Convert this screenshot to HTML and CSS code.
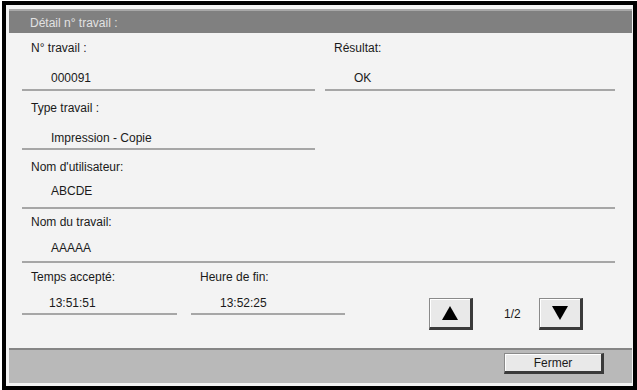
FILE: index.html
```html
<!DOCTYPE html>
<html lang="fr">
<head>
<meta charset="UTF-8">
<title>Détail n° travail</title>
<link rel="stylesheet" href="styles.css">
</head>
<body>

<div class="frame">
  <div class="title">Détail n° travail :</div>

  <div class="details">
    <!-- numéro + résultat -->
    <div class="row r1">
      <div class="field w-half">
        <div class="label">N° travail :</div>
        <div class="value">000091</div>
      </div>
      <div class="field w-result">
        <div class="label">Résultat:</div>
        <div class="value">OK</div>
      </div>
    </div>

    <div class="row r2">
      <div class="field w-half">
        <div class="label">Type travail :</div>
        <div class="value">Impression - Copie</div>
      </div>
    </div>

    <div class="row r3">
      <div class="field w-full">
        <div class="label">Nom d'utilisateur:</div>
        <div class="value">ABCDE</div>
      </div>
    </div>

    <div class="row r4">
      <div class="field w-full">
        <div class="label">Nom du travail:</div>
        <div class="value">AAAAA</div>
      </div>
    </div>

    <!-- heures + pagination -->
    <div class="row r5">
      <div class="field w-time">
        <div class="label">Temps accepté:</div>
        <div class="value value-time">13:51:51</div>
      </div>
      <div class="field w-time w-end">
        <div class="label">Heure de fin:</div>
        <div class="value">13:52:25</div>
      </div>
      <div class="pager">
        <button class="btn page-btn"><span class="tri tri-up"></span></button>
        <span class="page-num">1/2</span>
        <button class="btn page-btn"><span class="tri tri-down"></span></button>
      </div>
    </div>
  </div>

  <div class="footer">
    <button class="btn close-btn">Fermer</button>
  </div>
</div>

</body>
</html>
```

FILE: styles.css
```css
*{box-sizing:border-box;margin:0;padding:0}
body{font-family:"Liberation Sans",Arial,sans-serif;font-size:12px;color:#1a1a1a;background:#fff}

/* cadre */
.frame{margin:1px 0 0 2px;width:635px;height:389px;border:4px solid #000;background:#f3f3f3;padding:4px 1px 3px 3px;display:flex;flex-direction:column}
.title{height:24px;background:#808080;border-top:2px solid #a8a8a8;color:#e2e2e2;padding:3px 0 0 21px;line-height:19px}

/* champs */
.details{flex:1;padding:0 17px 0 13px}
.row{display:flex;align-items:flex-start}
.field{border-bottom:2px solid #a6a6a6}
.label{height:16px;line-height:16px;padding-left:9px}
.value{height:16px;line-height:16px;padding-left:29px}
.w-half{width:293px}
.w-result{width:290px;margin-left:10px}
.w-full{width:100%}
.w-time{width:155px}
.w-end{width:154px;margin-left:14px}
.value-time{padding-left:27px}

.r1 .field{padding:7px 0 3px}
.r1 .value{margin-top:14px}
.r2 .field{padding:9px 0 2px}
.r2 .value{margin-top:14px}
.r3 .field{padding:9px 0 8px}
.r3 .value{margin-top:8px}
.r4 .field{padding:5px 0 5px}
.r4 .value{margin-top:10px}
.r5 .field{padding:6px 0 2px}
.r5 .value{margin-top:10px}

/* pagination */
.pager{display:flex;align-items:center;margin:35px 0 0 84px}
.page-num{margin:0 18px 0 31px}
.tri{display:block;width:0;height:0;border-left:8px solid transparent;border-right:8px solid transparent}
.tri-up{border-bottom:14px solid #000}
.tri-down{border-top:14px solid #000}

/* boutons */
.btn{display:flex;align-items:center;justify-content:center;font-family:inherit;font-size:12px;color:#1a1a1a;background:#e9e9e9;border:1px solid #8a8a8a;border-right:3px solid #3a3a3a;border-bottom:3px solid #3a3a3a;box-shadow:inset 1px 1px 0 #fff}
.page-btn{width:44px;height:32px}
.close-btn{width:100px;height:21px}

/* bas */
.footer{height:35px;background:#b9b9b9;border-top:2px solid #858585;display:flex;justify-content:flex-end;padding:3px 28px 0 0}
```
